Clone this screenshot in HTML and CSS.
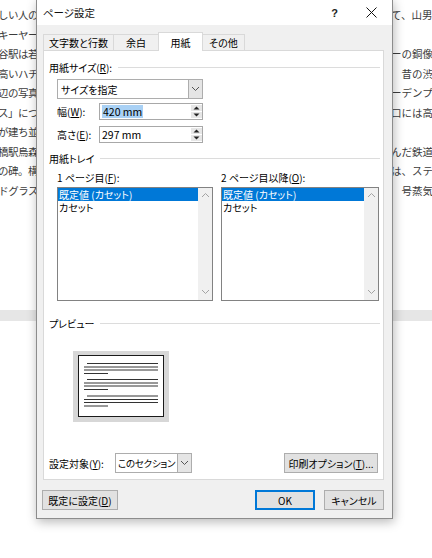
FILE: index.html
```html
<!DOCTYPE html>
<html lang="ja">
<head>
<meta charset="utf-8">
<title>ページ設定</title>
<link rel="stylesheet" href="styles.css">
</head>
<body>
<div class="doc">
  <div class="doc-lines">
    <div class="doc-line"><span class="doc-l">美しい人の</span><span class="doc-r">て、山男</span></div>
    <div class="doc-line"><span class="doc-l">ッキーヤー</span><span class="doc-r"></span></div>
    <div class="doc-line"><span class="doc-l">渋谷駅は若</span><span class="doc-r">ーの銅像で</span></div>
    <div class="doc-line"><span class="doc-l">名高いハチ</span><span class="doc-r">　昔の渋谷</span></div>
    <div class="doc-line"><span class="doc-l">周辺の写真</span><span class="doc-r">ーデンプレ</span></div>
    <div class="doc-line"><span class="doc-l">ス」につ</span><span class="doc-r">口には高い</span></div>
    <div class="doc-line"><span class="doc-l">が建ち並</span><span class="doc-r"></span></div>
    <div class="doc-line"><span class="doc-l">新橋駅烏森</span><span class="doc-r">んだ鉄道の</span></div>
    <div class="doc-line"><span class="doc-l">の碑。構</span><span class="doc-r">は、ステー</span></div>
    <div class="doc-line"><span class="doc-l">ドグラス</span><span class="doc-r">　号蒸気機</span></div>
  </div>
  <div class="page-gap"></div>
</div>

<div class="dialog">
  <div class="titlebar">
    <span class="title">ページ設定</span>
    <span class="tb-btn tb-help">?</span>
    <span class="tb-btn tb-close">
      <svg width="11" height="11" viewBox="0 0 11 11"><path d="M0.5 0.5L10.5 10.5M10.5 0.5L0.5 10.5" stroke="#111" stroke-width="1"/></svg>
    </span>
  </div>
  <div class="dlg-body">
    <div class="tabs">
      <div class="tab tab-w1">文字数と行数</div>
      <div class="tab tab-w2">余白</div>
      <div class="tab tab-w3 active">用紙</div>
      <div class="tab tab-w4">その他</div>
    </div>
    <div class="panel">
      <div class="group-head"><span>用紙サイズ(<u>R</u>):</span><span class="rule"></span></div>
      <div class="combo combo-size">
        <span class="combo-text">サイズを指定</span>
        <span class="combo-btn"><svg width="9" height="6" viewBox="0 0 9 6"><path d="M1 1L4.5 4.5L8 1" fill="none" stroke="#555" stroke-width="1"/></svg></span>
      </div>
      <div class="field-row field-w">
        <span class="field-label">幅(<u>W</u>):</span>
        <div class="spin">
          <span class="spin-text"><span class="sel">420 mm</span></span>
          <span class="spin-btns">
            <span class="spin-b"><svg width="7" height="4" viewBox="0 0 7 4"><path d="M0.5 3.5L3.5 0.5L6.5 3.5Z" fill="#222"/></svg></span>
            <span class="spin-b"><svg width="7" height="4" viewBox="0 0 7 4"><path d="M0.5 0.5L3.5 3.5L6.5 0.5Z" fill="#222"/></svg></span>
          </span>
        </div>
      </div>
      <div class="field-row field-h">
        <span class="field-label">高さ(<u>E</u>):</span>
        <div class="spin">
          <span class="spin-text">297 mm</span>
          <span class="spin-btns">
            <span class="spin-b"><svg width="7" height="4" viewBox="0 0 7 4"><path d="M0.5 3.5L3.5 0.5L6.5 3.5Z" fill="#222"/></svg></span>
            <span class="spin-b"><svg width="7" height="4" viewBox="0 0 7 4"><path d="M0.5 0.5L3.5 3.5L6.5 0.5Z" fill="#222"/></svg></span>
          </span>
        </div>
      </div>

      <div class="group-head gh-tray"><span>用紙トレイ</span><span class="rule"></span></div>
      <div class="trays">
        <div class="tray tray-1">
          <div class="tray-label">1 ページ目(<u>F</u>):</div>
          <div class="listbox">
            <div class="items">
              <div class="item selected">既定値 (カセット)</div>
              <div class="item">カセット</div>
            </div>
            <div class="vscroll">
              <svg width="9" height="6" viewBox="0 0 9 6"><path d="M1 5L4.5 1.5L8 5" fill="none" stroke="#a3a3a3" stroke-width="1"/></svg>
              <svg width="9" height="6" viewBox="0 0 9 6"><path d="M1 1L4.5 4.5L8 1" fill="none" stroke="#a3a3a3" stroke-width="1"/></svg>
            </div>
          </div>
        </div>
        <div class="tray tray-2">
          <div class="tray-label">2 ページ目以降(<u>O</u>):</div>
          <div class="listbox">
            <div class="items">
              <div class="item selected">既定値 (カセット)</div>
              <div class="item">カセット</div>
            </div>
            <div class="vscroll">
              <svg width="9" height="6" viewBox="0 0 9 6"><path d="M1 5L4.5 1.5L8 5" fill="none" stroke="#a3a3a3" stroke-width="1"/></svg>
              <svg width="9" height="6" viewBox="0 0 9 6"><path d="M1 1L4.5 4.5L8 1" fill="none" stroke="#a3a3a3" stroke-width="1"/></svg>
            </div>
          </div>
        </div>
      </div>

      <div class="group-head gh-prev"><span>プレビュー</span><span class="rule"></span></div>
      <div class="preview">
        <svg width="96" height="71" viewBox="0 0 96 71">
          <rect x="0" y="0" width="96" height="71" fill="#d7d7d7"/>
          <rect x="5.5" y="4.5" width="85" height="61" fill="#fff" stroke="#1a1a1a" stroke-width="1"/>
          <g stroke="#333" stroke-width="1">
            <path d="M14 12.5H85M11 16H85M11 19H85M11 22.5H35"/>
            <path d="M14 28.5H85M11 32H85M11 35H85M11 38.5H35"/>
            <path d="M14 45H85M11 48.5H85M11 51.5H85M11 55H35"/>
          </g>
        </svg>
      </div>

      <div class="apply-row">
        <span class="apply-label">設定対象(<u>Y</u>):</span>
        <div class="combo combo-apply">
          <span class="combo-text">このセクション</span>
          <span class="combo-btn"><svg width="9" height="6" viewBox="0 0 9 6"><path d="M1 1L4.5 4.5L8 1" fill="none" stroke="#555" stroke-width="1"/></svg></span>
        </div>
        <span class="btn btn-print">印刷オプション(<u>T</u>)...</span>
      </div>
    </div>
    <div class="footer">
      <span class="btn btn-default">既定に設定(<u>D</u>)</span>
      <span class="btn btn-ok">OK</span>
      <span class="btn btn-cancel">キャンセル</span>
    </div>
  </div>
</div>
</body>
</html>
```
FILE: styles.css
```css
* { box-sizing: border-box; }
html, body { margin: 0; padding: 0; }
body {
  width: 432px;
  height: 558px;
  overflow: hidden;
  position: relative;
  background: #fff;
  font-family: "Noto Sans CJK JP", "Liberation Sans", sans-serif;
}
u { text-decoration: underline; text-underline-offset: 1px; }

/* background document */
.doc-lines { height: 310px; padding-top: 5px; }
.doc-line {
  display: flex;
  justify-content: space-between;
  height: 19.5px;
  line-height: 19.5px;
  font-size: 10.5px;
  letter-spacing: -0.5px;
  color: #3c3c3c;
  white-space: nowrap;
}
.doc-l {
  width: 38px;
  overflow: hidden;
  display: flex;
  justify-content: flex-end;
}
.doc-r {
  width: 41px;
  overflow: hidden;
  letter-spacing: 0;
}
.page-gap { height: 11px; background: #e6e6e6; }

/* dialog */
.dialog {
  position: absolute;
  left: 36px;
  top: -1px;
  width: 357px;
  height: 520px;
  background: #f0f0f0;
  border: 1px solid #8c8c8c;
  box-shadow: 1px 3px 10px rgba(0, 0, 0, 0.28);
  display: flex;
  flex-direction: column;
  font-size: 10px;
  color: #000;
  font-feature-settings: "palt";
  white-space: nowrap;
}
.titlebar {
  height: 25px;
  background: #fff;
  display: flex;
  align-items: center;
  padding-left: 6px;
  padding-right: 2px;
}
.title { flex: 1; font-size: 10.5px; color: #111; }
.tb-btn {
  width: 37px;
  height: 25px;
  display: flex;
  align-items: center;
  justify-content: center;
}
.tb-help { font-size: 11px; font-weight: bold; color: #222; font-family: "Liberation Sans", sans-serif; }

.dlg-body {
  flex: 1;
  display: flex;
  flex-direction: column;
  padding: 7px 8px 0 6px;
}
.tabs {
  display: flex;
  align-items: flex-end;
  height: 18px;
  position: relative;
  z-index: 2;
}
.tab {
  height: 16px;
  border: 1px solid #d9d9d9;
  border-bottom: none;
  background: #f0f0f0;
  display: flex;
  align-items: center;
  justify-content: center;
  margin-right: -1px;
}
.tab.active {
  height: 19px;
  margin-bottom: -1px;
  background: #fff;
  position: relative;
  z-index: 3;
}
.tab-w1 { width: 71px; }
.tab-w2 { width: 46px; }
.tab-w3 { width: 45px; }
.tab-w4 { width: 43px; }

.panel {
  height: 430px;
  background: #fff;
  border: 1px solid #d9d9d9;
  padding: 9px 3px 0 5px;
  display: flex;
  flex-direction: column;
}
.group-head {
  display: flex;
  align-items: center;
  height: 14px;
}
.group-head .rule {
  flex: 1;
  margin-left: 6px;
  border-top: 1px solid #dcdcdc;
}
.gh-tray { margin-top: 8px; }
.gh-prev { margin-top: 15px; }

.combo {
  display: flex;
  height: 20px;
  border: 1px solid #adadad;
  background: #fff;
}
.combo-text { flex: 1; padding-left: 3px; display: flex; align-items: center; overflow: hidden; }
.combo-btn {
  width: 14px;
  flex: none;
  background: #e5e5e5;
  border-left: 1px solid #adadad;
  display: flex;
  align-items: center;
  justify-content: center;
}
.combo-size { width: 146px; margin: 5px 0 0 8px; }

.field-row { display: flex; align-items: center; margin-left: 8px; height: 17px; }
.field-w { margin-top: 4px; }
.field-h { margin-top: 6px; }
.field-label { width: 42px; }
.spin {
  width: 104px;
  height: 17px;
  border: 1px solid #a8a8a8;
  display: flex;
}
.spin-text { flex: 1; display: flex; align-items: center; padding-left: 2px; font-size: 10.5px; }
.sel { background: #a9d1f5; padding: 0 1px; line-height: 13px; }
.spin-btns { width: 11px; display: flex; flex-direction: column; gap: 1px; padding: 1px 0; }
.spin-b {
  flex: 1;
  background: #e6e6e6;
  display: flex;
  align-items: center;
  justify-content: center;
}

.trays { display: flex; gap: 8px; margin: 6px 0 0 8px; }
.tray-1 { width: 156px; }
.tray-2 { width: 158px; }
.tray-label { height: 14px; line-height: 14px; margin-bottom: 2px; }
.listbox {
  height: 114px;
  border: 1px solid #828282;
  display: flex;
}
.items { flex: 1; padding-top: 0; }
.item { height: 13px; line-height: 13px; padding-left: 1px; overflow: hidden; }
.item.selected { background: #0078d7; color: #fff; }
.vscroll {
  width: 14px;
  background: #f0f0f0;
  display: flex;
  flex-direction: column;
  justify-content: space-between;
  align-items: center;
  padding: 4px 0 5px;
}

.preview { margin: 21px 0 0 24px; height: 71px; }
.preview svg { display: block; }

.apply-row {
  display: flex;
  align-items: center;
  margin-top: 31px;
  height: 20px;
  padding-right: 2px;
}
.apply-label { width: 66px; }
.combo-apply { width: 77px; }
.combo-apply .combo-text { font-size: 9.5px; letter-spacing: -0.3px; padding-left: 2px; }
.btn {
  height: 20px;
  background: #e1e1e1;
  border: 1px solid #adadad;
  display: flex;
  align-items: center;
  justify-content: center;
}
.btn-print { width: 94px; margin-left: auto; }

.footer {
  display: flex;
  margin: 10px 0 0 -1px;
  height: 20px;
}
.btn-default { width: 76px; }
.btn-ok { width: 60px; margin-left: auto; border-color: #0078d7; box-shadow: inset 0 0 0 1px #0078d7; }
.btn-cancel { width: 60px; margin-left: 9px; }
```
